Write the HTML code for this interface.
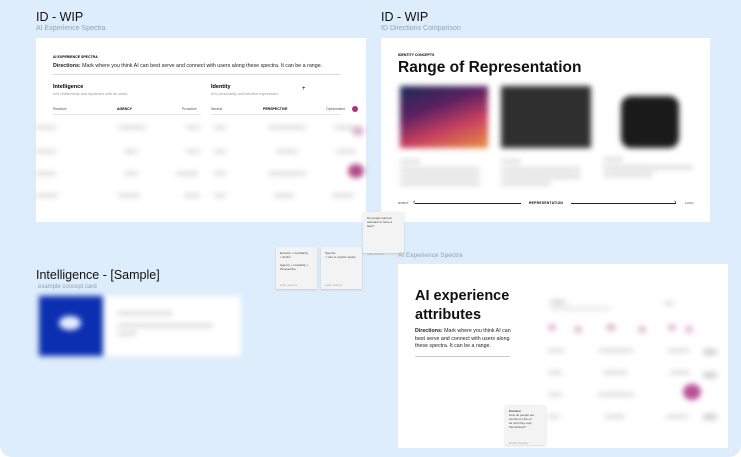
<!DOCTYPE html>
<html><head><meta charset="utf-8"><style>
*{margin:0;padding:0;box-sizing:border-box}
body{width:741px;height:457px;background:#fff;font-family:"Liberation Sans",sans-serif;overflow:hidden;position:relative}
.bg{position:absolute;left:0;top:0;width:741px;height:457px;background:#ddedfb;border-radius:0 0 12px 12px}
.abs{position:absolute}
.t{font-size:12.5px;color:#111}
.st{font-size:7px;color:#8ea3b5}
.card{position:absolute;background:#fff}
.b{filter:blur(3px)}
.gl{position:absolute;background:#cfcfcf;height:3px;border-radius:2px}
.note{position:absolute;background:#f3f3f3;box-shadow:0 1px 2px rgba(0,0,0,.15);font-size:3px;color:#444;padding:4px;line-height:4px}
.dot{position:absolute;border-radius:50%;background:#b0307c}
</style></head><body>
<div class="bg"></div>

<div class="abs t" style="left:36px;top:10px">ID - WIP</div>
<div class="abs st" style="left:36px;top:25px">AI Experience Spectra</div>
<div class="card" style="left:36px;top:38px;width:330px;height:184px">
 <div class="abs" style="left:17px;top:17px;font-size:3.5px;font-weight:bold">AI EXPERIENCE SPECTRA</div>
 <div class="abs" style="left:17px;top:25px;font-size:5.3px;color:#222;white-space:nowrap"><b>Directions:</b> Mark where you think AI can best serve and connect with users along these spectra. It can be a range.</div>
 <div class="abs" style="left:17px;top:36px;width:288px;height:1px;background:#ddd"></div>
 <div class="abs" style="left:17px;top:46px;font-size:5.5px;font-weight:bold">Intelligence</div>
 <div class="abs" style="left:17px;top:54px;font-size:3.8px;color:#999">AI's relationship and dynamics with its users.</div>
 <div class="abs" style="left:175px;top:46px;font-size:5.5px;font-weight:bold">Identity</div>
 <div class="abs" style="left:175px;top:54px;font-size:3.8px;color:#999">AI's personality and emotive expression.</div>
 <div class="abs" style="left:266px;top:48px;font-size:6px">+</div>
 <div class="abs" style="left:17px;top:69px;font-size:3.5px;color:#555">Reactive</div>
 <div class="abs" style="left:81px;top:69px;font-size:3.5px;font-weight:bold">AGENCY</div>
 <div class="abs" style="left:146px;top:69px;font-size:3.5px;color:#555">Proactive</div>
 <div class="abs" style="left:175px;top:69px;font-size:3.5px;color:#555">Neutral</div>
 <div class="abs" style="left:227px;top:69px;font-size:3.5px;font-weight:bold">PERSPECTIVE</div>
 <div class="abs" style="left:290px;top:69px;font-size:3.5px;color:#555">Opinionated</div>
 <div class="abs" style="left:17px;top:76px;width:148px;height:1px;background:#e5e5e5"></div>
 <div class="abs" style="left:175px;top:76px;width:130px;height:1px;background:#e5e5e5"></div>
 <div class="dot" style="left:316px;top:68px;width:6px;height:6px"></div>
 <div class="b">
  <div class="gl" style="left:0;top:88px;width:20px"></div><div class="gl" style="left:82px;top:88px;width:28px"></div><div class="gl" style="left:150px;top:88px;width:14px"></div><div class="gl" style="left:178px;top:88px;width:12px"></div><div class="gl" style="left:232px;top:88px;width:38px"></div><div class="gl" style="left:298px;top:88px;width:20px"></div>
  <div class="gl" style="left:0;top:112px;width:20px"></div><div class="gl" style="left:88px;top:112px;width:14px"></div><div class="gl" style="left:150px;top:112px;width:14px"></div><div class="gl" style="left:178px;top:112px;width:12px"></div><div class="gl" style="left:240px;top:112px;width:22px"></div><div class="gl" style="left:300px;top:112px;width:20px"></div>
  <div class="gl" style="left:0;top:134px;width:20px"></div><div class="gl" style="left:88px;top:134px;width:14px"></div><div class="gl" style="left:140px;top:134px;width:22px"></div><div class="gl" style="left:178px;top:134px;width:12px"></div><div class="gl" style="left:232px;top:134px;width:38px"></div>
  <div class="gl" style="left:0;top:156px;width:22px"></div><div class="gl" style="left:82px;top:156px;width:22px"></div><div class="gl" style="left:148px;top:156px;width:16px"></div><div class="gl" style="left:178px;top:156px;width:12px"></div><div class="gl" style="left:238px;top:156px;width:20px"></div><div class="gl" style="left:296px;top:156px;width:22px"></div>
  <div class="dot" style="left:312px;top:126px;width:16px;height:14px;background:#b04a8a"></div>
  <div class="dot" style="left:316px;top:88px;width:12px;height:10px;background:#d8b3cc"></div>
 </div>
</div>

<div class="abs t" style="left:381px;top:10px">ID - WIP</div>
<div class="abs st" style="left:381px;top:25px">ID Directions Comparison</div>
<div class="card" style="left:381px;top:38px;width:329px;height:184px">
 <div class="abs" style="left:17px;top:15px;font-size:3.5px;font-weight:bold">IDENTITY CONCEPTS</div>
 <div class="abs" style="left:17px;top:21px;font-size:15.5px;font-weight:bold;color:#111;white-space:nowrap">Range of Representation</div>
 <div class="b">
  <div class="abs" style="left:19px;top:48px;width:88px;height:62px;background:linear-gradient(160deg,#1a2a55 0%,#5a2060 35%,#c84060 65%,#e89040 100%)"></div>
  <div class="abs" style="left:120px;top:48px;width:90px;height:62px;background:#2f2f2f"></div>
  <div class="abs" style="left:240px;top:58px;width:58px;height:52px;background:#1a1a1a;border-radius:10px"></div>
  <div class="gl" style="left:19px;top:122px;width:20px"></div><div class="gl" style="left:19px;top:130px;width:80px"></div><div class="gl" style="left:19px;top:137px;width:80px"></div><div class="gl" style="left:19px;top:144px;width:80px"></div>
  <div class="gl" style="left:120px;top:122px;width:20px"></div><div class="gl" style="left:120px;top:130px;width:80px"></div><div class="gl" style="left:120px;top:137px;width:80px"></div><div class="gl" style="left:120px;top:144px;width:50px"></div>
  <div class="gl" style="left:222px;top:120px;width:20px"></div><div class="gl" style="left:222px;top:128px;width:90px"></div><div class="gl" style="left:222px;top:135px;width:50px"></div>
 </div>
 <div class="abs" style="left:17px;top:163px;font-size:3px;color:#444">ROBOT</div>
 <div class="abs" style="left:34px;top:165px;width:106px;height:1px;background:#222"></div>
 <div class="abs" style="left:32px;top:161px;font-size:7px;line-height:7px">‹</div>
 <div class="abs" style="left:148px;top:163px;font-size:3.3px;font-weight:bold;letter-spacing:.3px">REPRESENTATION</div>
 <div class="abs" style="left:190px;top:165px;width:105px;height:1px;background:#222"></div>
 <div class="abs" style="left:293px;top:161px;font-size:7px;line-height:7px">›</div>
 <div class="abs" style="left:304px;top:163px;font-size:3px;color:#444">LOGO</div>
</div>

<div class="abs t" style="left:36px;top:268px">Intelligence - [Sample]</div>
<div class="abs st" style="left:38px;top:284px;font-size:6px">example concept card</div>
<div class="abs b" style="left:39px;top:296px;width:202px;height:60px;background:#fff">
 <div class="abs" style="left:0;top:0;width:64px;height:60px;background:#0b2fb0"></div>
 <div class="abs" style="left:20px;top:20px;width:22px;height:14px;background:#e8eeff;border-radius:50%"></div>
 <div class="gl" style="left:78px;top:16px;width:56px"></div>
 <div class="gl" style="left:78px;top:28px;width:96px"></div>
 <div class="gl" style="left:78px;top:36px;width:20px"></div>
</div>

<div class="note" style="left:276px;top:247px;width:41px;height:42px">Emotion + Familiarity<br>&gt; Action<br><br>Agency + Creativity +<br>Perspective<br><br><br><br><span style="color:#aaa">Little Joanna</span></div>
<div class="note" style="left:321px;top:247px;width:41px;height:42px">Spectra<br>&gt; Use to explore topics<br><br><br><br><br><br><br><span style="color:#aaa">Little Joanna</span></div>
<div class="note" style="left:363px;top:212px;width:41px;height:41px">Do people want an<br>assistant to have a face?<br><br><br><br><br><br><br><span style="color:#aaa">Little Joanna</span></div>

<div class="abs st" style="left:398px;top:252px;font-size:6.5px">AI Experience Spectra</div>
<div class="card" style="left:398px;top:264px;width:330px;height:184px">
 <div class="abs" style="left:17px;top:23px;font-size:14.5px;font-weight:bold;line-height:19px;color:#111">AI experience<br>attributes</div>
 <div class="abs" style="left:17px;top:64px;font-size:5.3px;line-height:7.5px;color:#222;width:100px"><b>Directions:</b> Mark where you think AI can best serve and connect with users along these spectra. It can be a range.</div>
 <div class="abs" style="left:17px;top:92px;width:95px;height:1px;background:#ccc"></div>
 <div class="b">
  <div class="gl" style="left:152px;top:36px;width:16px;height:4px"></div><div class="gl" style="left:152px;top:43px;width:60px;background:#e0e0e0"></div>
  <div class="gl" style="left:266px;top:38px;width:10px"></div>
  <div class="dot" style="left:150px;top:60px;width:8px;height:7px;background:#dcb3cf"></div>
  <div class="dot" style="left:176px;top:62px;width:8px;height:7px;background:#dcb3cf"></div>
  <div class="dot" style="left:208px;top:60px;width:10px;height:7px;background:#dcb3cf"></div>
  <div class="dot" style="left:240px;top:62px;width:8px;height:7px;background:#dcb3cf"></div>
  <div class="dot" style="left:270px;top:60px;width:8px;height:7px;background:#dcb3cf"></div>
  <div class="dot" style="left:287px;top:62px;width:8px;height:7px;background:#dcb3cf"></div>
  <div class="gl" style="left:150px;top:85px;width:16px"></div><div class="gl" style="left:200px;top:85px;width:36px"></div><div class="gl" style="left:270px;top:85px;width:22px"></div>
  <div class="gl" style="left:150px;top:107px;width:14px"></div><div class="gl" style="left:205px;top:107px;width:24px"></div><div class="gl" style="left:272px;top:107px;width:20px"></div>
  <div class="gl" style="left:150px;top:129px;width:14px"></div><div class="gl" style="left:200px;top:129px;width:36px"></div>
  <div class="dot" style="left:285px;top:120px;width:18px;height:16px;background:#b85094"></div>
  <div class="gl" style="left:150px;top:151px;width:12px"></div><div class="gl" style="left:207px;top:151px;width:20px"></div><div class="gl" style="left:268px;top:151px;width:22px"></div>
  <div class="gl" style="left:305px;top:85px;width:14px;height:6px"></div><div class="gl" style="left:305px;top:108px;width:14px;height:6px"></div><div class="gl" style="left:305px;top:150px;width:14px;height:6px"></div>
 </div>
</div>
<div class="note" style="left:505px;top:405px;width:41px;height:40px"><b>Emotion</b><br>How do people wa<br>emotion in the ex<br>as how they expr<br>themselves?<br><br><br><br><span style="color:#aaa">Daniel Sunday</span></div>
</body></html>
